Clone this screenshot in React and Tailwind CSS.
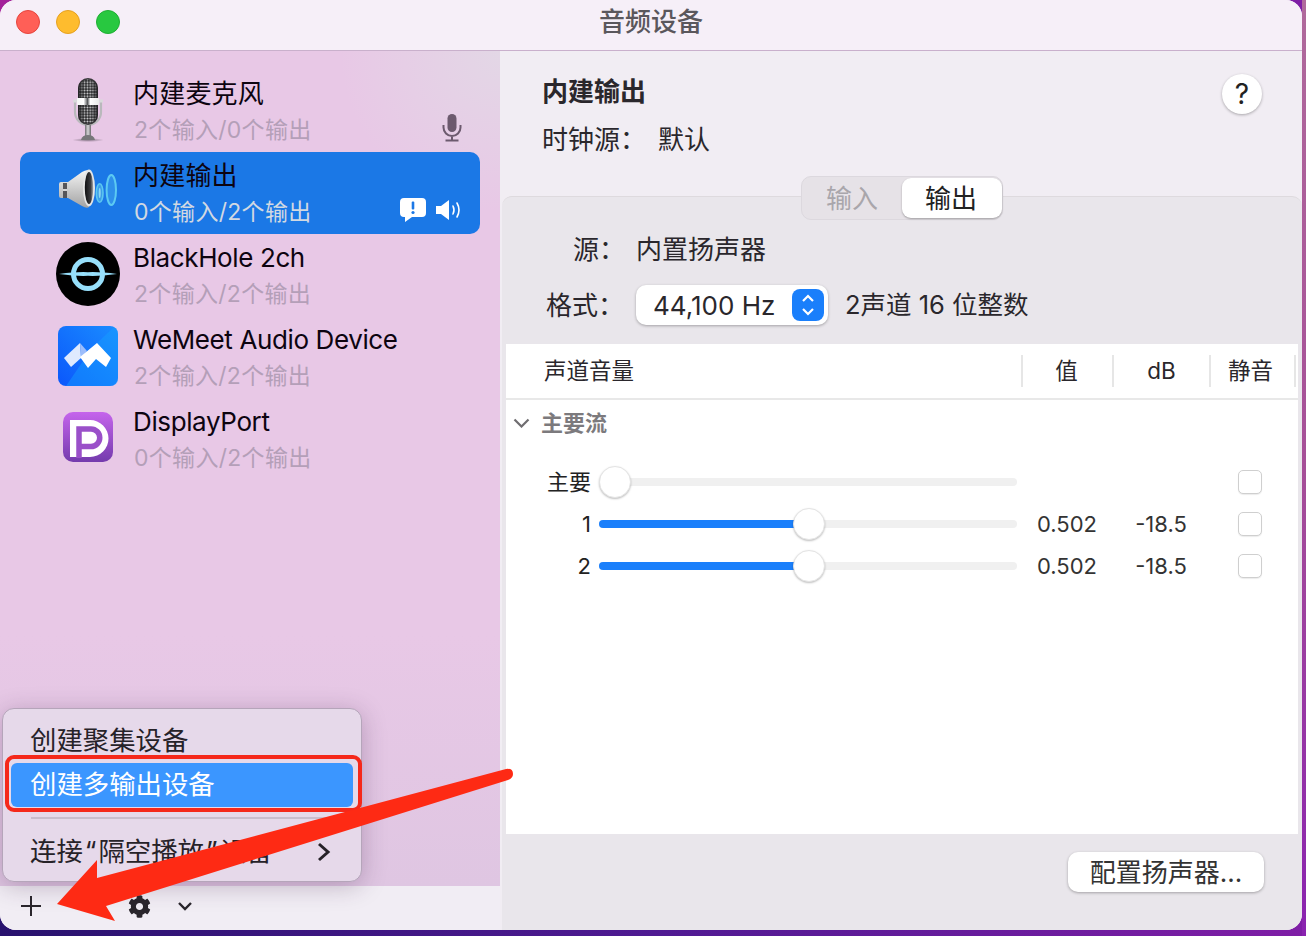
import { FaCog } from "react-icons/fa";

const CJK = "font-['Inter','Noto_Sans_CJK_SC',sans-serif]";

function MicPhoto() {
  return (
    <svg width="32" height="64" viewBox="0 0 32 64">
      <defs>
        <linearGradient id="micBand" x1="0" x2="1" y1="0" y2="0">
          <stop offset="0" stopColor="#f4f4f4" />
          <stop offset="0.3" stopColor="#ffffff" />
          <stop offset="0.48" stopColor="#55575a" />
          <stop offset="0.6" stopColor="#ffffff" />
          <stop offset="1" stopColor="#e8e8e8" />
        </linearGradient>
        <linearGradient id="micStem" x1="0" x2="1" y1="0" y2="0">
          <stop offset="0" stopColor="#6f6f72" />
          <stop offset="0.5" stopColor="#d6d6d8" />
          <stop offset="1" stopColor="#6a6a6d" />
        </linearGradient>
        <linearGradient id="micShade" x1="0" x2="1" y1="0" y2="0">
          <stop offset="0" stopColor="#1d1d1f" stopOpacity="0.75" />
          <stop offset="0.35" stopColor="#1d1d1f" stopOpacity="0" />
          <stop offset="0.7" stopColor="#1d1d1f" stopOpacity="0" />
          <stop offset="1" stopColor="#1d1d1f" stopOpacity="0.75" />
        </linearGradient>
        <pattern id="micDots" width="2.8" height="2.8" patternUnits="userSpaceOnUse">
          <rect width="2.8" height="2.8" fill="#242426" />
          <circle cx="1.4" cy="1.4" r="0.95" fill="#dcdcde" />
        </pattern>
        <radialGradient id="micShadow">
          <stop offset="0" stopColor="#544c56" stopOpacity="0.65" />
          <stop offset="1" stopColor="#544c56" stopOpacity="0" />
        </radialGradient>
      </defs>
      <ellipse cx="16" cy="62" rx="16" ry="2" fill="url(#micShadow)" />
      <path d="M3 22 V34 a13 13 0 0 0 26 0 V22" fill="none" stroke="#b9b9bc" strokeWidth="2.2" />
      <rect x="13" y="47" width="6" height="11" fill="url(#micStem)" />
      <path d="M9 62 q1 -5 7 -5 q6 0 7 5z" fill="#77777a" />
      <rect x="6" y="0" width="20" height="47" rx="10" fill="#3a3a3c" />
      <rect x="7" y="1.5" width="18" height="44" rx="9" fill="url(#micDots)" />
      <rect x="6" y="0" width="20" height="47" rx="10" fill="url(#micShade)" />
      <rect x="5" y="20" width="22" height="7" fill="url(#micBand)" />
      <rect x="1" y="21.5" width="4" height="3" fill="#d9d9db" />
      <rect x="27" y="21.5" width="4" height="3" fill="#d9d9db" />
    </svg>
  );
}

function SpeakerPhoto() {
  return (
    <svg width="60" height="46" viewBox="0 0 60 46">
      <defs>
        <linearGradient id="spkBody" x1="0" x2="0" y1="0" y2="1">
          <stop offset="0" stopColor="#f4f4f4" />
          <stop offset="1" stopColor="#a3a3a3" />
        </linearGradient>
        <linearGradient id="spkCone" x1="0" x2="1" y1="0" y2="0">
          <stop offset="0" stopColor="#0f0f11" />
          <stop offset="0.7" stopColor="#3d3d40" />
          <stop offset="1" stopColor="#a8a8aa" />
        </linearGradient>
      </defs>
      <path d="M1 15 q0 -2 2 -2 h7 L24 3 q5 -3 7 -1 v36 q-2 2 -7 -1 L10 29 h-7 q-2 0 -2 -2z" fill="url(#spkBody)" />
      <rect x="5" y="14" width="4" height="15" fill="#56565a" />
      <rect x="5" y="20" width="4" height="2" fill="#d5d5d5" />
      <ellipse cx="31" cy="19" rx="6" ry="18.5" fill="#e6e6e6" />
      <ellipse cx="31" cy="19" rx="4.2" ry="16" fill="url(#spkCone)" />
      <ellipse cx="41.7" cy="24" rx="3.3" ry="9.3" fill="#3d9ee8" stroke="#5cc8f0" strokeWidth="1.6" />
      <ellipse cx="41.7" cy="24" rx="1" ry="5" fill="#8fd8f2" />
      <ellipse cx="53.3" cy="21" rx="4.7" ry="15" fill="#2f90ea" stroke="#5ccaf2" strokeWidth="2" />
    </svg>
  );
}

function BlackHole() {
  return (
    <svg width="64" height="64" viewBox="0 0 64 64">
      <circle cx="32" cy="32" r="32" fill="#000" />
      <circle cx="32" cy="32" r="14.5" fill="none" stroke="#97dffb" strokeWidth="5" />
      <path d="M3 32 q18 -2.4 29 -1.8 q11 -0.6 29 1.8 q-18 2.4 -29 1.8 q-11 0.6 -29 -1.8z" fill="#97dffb" />
    </svg>
  );
}

function WeMeet() {
  return (
    <svg width="60" height="60" viewBox="0 0 60 60">
      <defs>
        <linearGradient id="wmBg" x1="0" x2="1" y1="1" y2="0">
          <stop offset="0" stopColor="#0b57fb" />
          <stop offset="1" stopColor="#1a8dff" />
        </linearGradient>
      </defs>
      <rect width="60" height="60" rx="8" fill="url(#wmBg)" />
      <path d="M34 22 L56 1 Q60 3 60 8 V52 Q60 60 52 60 H8z" fill="#16a0ff" fillOpacity="0.45" />
      <path d="M6 32 L22 17 L23 32 L13 41z" fill="#dfeafe" />
      <path d="M22 17 L29 25 L23 32z" fill="#9dbdfb" />
      <path d="M22 31 L39 17 L53 32 L48 41 L38 33 L30 42z" fill="#fff" />
    </svg>
  );
}

function DisplayPortIcon() {
  return (
    <svg width="52" height="52" viewBox="0 0 52 52">
      <defs>
        <linearGradient id="dpBg" x1="0" x2="0" y1="0" y2="1">
          <stop offset="0" stopColor="#c564ec" />
          <stop offset="1" stopColor="#743bad" />
        </linearGradient>
      </defs>
      <rect x="1" y="0" width="50" height="50" rx="10" fill="url(#dpBg)" />
      <path d="M8 8 H28 a18.5 18.5 0 0 1 0 37 H8z" fill="#fff" />
      <path d="M17 46 V17 H29 a8.75 8.75 0 0 1 0 17.5 H17" fill="none" stroke="#9a50c9" strokeWidth="5.5" />
    </svg>
  );
}

function SmallMic() {
  return (
    <svg width="20" height="28" viewBox="0 0 20 28" fill="none">
      <rect x="5.5" y="0" width="9" height="18" rx="4.5" fill="#6c5a6e" />
      <path d="M1.5 11 v2.5 a8.5 8.5 0 0 0 17 0 V11 M10 22 v4.5 M3.5 26.5 h13" stroke="#6c5a6e" strokeWidth="2" />
    </svg>
  );
}

function AlertBubble() {
  return (
    <svg width="26" height="24" viewBox="0 0 26 24">
      <path d="M4 0 H22 a4 4 0 0 1 4 4 V15 a4 4 0 0 1 -4 4 H12 L5 24 V19 H4 a4 4 0 0 1 -4 -4 V4 a4 4 0 0 1 4 -4z" fill="#fff" />
      <rect x="11.7" y="3.5" width="2.6" height="8" rx="1" fill="#1b78e6" />
      <circle cx="13" cy="14.5" r="1.6" fill="#1b78e6" />
    </svg>
  );
}

function VolumeGlyph() {
  return (
    <svg width="27" height="20" viewBox="0 0 27 20" fill="none">
      <path d="M0 6 H5 L13 0 V20 L5 14 H0z" fill="#fff" />
      <path d="M17 6 q2 4 0 8 M21 3 q4 7 0 14" stroke="#fff" strokeWidth="1.6" strokeLinecap="round" />
    </svg>
  );
}

const devices = [
  { name: "内建麦克风", sub: "2个输入/0个输出", icon: <MicPhoto />, right: <SmallMic />, rightClass: "right-[18px]" },
  {
    name: "内建输出",
    sub: "0个输入/2个输出",
    icon: <SpeakerPhoto />,
    selected: true,
    rightClass: "right-[17px]",
    right: (
      <div className="flex items-center gap-[10px]">
        <AlertBubble />
        <VolumeGlyph />
      </div>
    ),
  },
  { name: "BlackHole 2ch", sub: "2个输入/2个输出", icon: <BlackHole />, latin: true },
  { name: "WeMeet Audio Device", sub: "2个输入/2个输出", icon: <WeMeet />, latin: true },
  { name: "DisplayPort", sub: "0个输入/2个输出", icon: <DisplayPortIcon />, latin: true },
];

function DeviceRow({ d }) {
  return (
    <div className={`relative mx-[20px] flex h-[82px] rounded-[10px] pl-[36px] ${d.selected ? "bg-[#1b78e6]" : ""}`}>
      <div className="flex w-[64px] items-center justify-center pb-[2px]">{d.icon}</div>
      <div className="ml-[13px] flex flex-col">
        <div
          className={`mt-[6px] h-[36px] text-[26px] leading-[36px] text-[#0d0410] ${
            d.latin ? "tracking-[-0.38px]" : "tracking-[0.2px]"
          }`}
        >
          {d.name}
        </div>
        <div
          className={`ml-[1px] h-[36px] text-[23px] leading-[36px] tracking-[0.3px] ${
            d.selected ? "text-[#d2d9e2]" : "text-[#b49fb8]"
          }`}
        >
          {d.sub}
        </div>
      </div>
      {d.right && <div className={`absolute top-[44px] flex h-[28px] items-center ${d.rightClass}`}>{d.right}</div>}
    </div>
  );
}

function Slider({ filled }) {
  return (
    <div className="relative h-[8px] w-[418px] rounded-full bg-[#f0f0f0]">
      {filled && <div className="h-full w-[200px] rounded-l-full bg-[#1a7ffb]" />}
      <div
        className={`absolute top-[-12px] h-[32px] w-[32px] rounded-full border border-[#e4e4e4] bg-white shadow-[0_1px_2px_rgba(0,0,0,0.25)] ${
          filled ? "left-[194px]" : "left-0"
        }`}
      />
    </div>
  );
}

function ChannelRow({ label, filled, value, db }) {
  return (
    <div className="flex h-[42px] items-center">
      <div className="w-[85px] text-right text-[22px] text-[#222]">{label}</div>
      <div className="ml-[8px]">
        <Slider filled={filled} />
      </div>
      <div className="w-[100px] text-center text-[22px] text-[#333]">{value}</div>
      <div className="w-[88px] text-center text-[22px] text-[#333]">{db}</div>
      <div className="ml-[33px] h-[24px] w-[24px] rounded-[5px] border border-[#cfcfcf] bg-white shadow-[0_1px_1px_rgba(0,0,0,0.08)]" />
    </div>
  );
}

export default function App() {
  return (
    <div
      className={`relative h-[936px] w-[1306px] overflow-hidden bg-[radial-gradient(circle_at_0_0,#a3219a_0,#a3219a_18px,transparent_19px),linear-gradient(90deg,#28126e_0%,#4f1a92_50%,#7f1ea6_100%)] ${CJK}`}
    >
      <div className="absolute inset-y-0 right-0 w-[4px] bg-[linear-gradient(180deg,#b06a9c_0%,#a64f98_50%,#8a22b0_100%)]" />
      <div className="relative flex h-[930px] w-[1302px] flex-col overflow-hidden rounded-[16px] bg-[#f1edf3]">
        {/* title bar */}
        <div className="relative flex h-[51px] shrink-0 items-center justify-center border-b border-[#c9b0cc] bg-[#f6eff8]">
          <div className="absolute left-[16px] top-[10px] flex gap-[16px]">
            <div className="h-[24px] w-[24px] rounded-full border border-[#e5443d] bg-[#ff5f57]" />
            <div className="h-[24px] w-[24px] rounded-full border border-[#e5a020] bg-[#febc2e]" />
            <div className="h-[24px] w-[24px] rounded-full border border-[#1fae33] bg-[#28c840]" />
          </div>
          <div className="mb-[7px] text-[26px] font-medium text-[#5a575c]">音频设备</div>
        </div>

        <div className="flex min-h-0 flex-1">
          {/* sidebar */}
          <div className="flex w-[500px] shrink-0 flex-col">
            <div className="flex-1 bg-[radial-gradient(circle_at_100%_0%,#e3d7e6_0,rgba(232,200,230,0)_160px),linear-gradient(180deg,#e8c8e6_0%,#e8c8e6_70%,#dfc6e2_100%)] pt-[19px]">
              {devices.map((d) => (
                <DeviceRow key={d.name} d={d} />
              ))}
            </div>
            <div className="flex h-[44px] shrink-0 items-center bg-[#f1edf4] pb-[4px] pl-[20px] text-[#2a262c]">
              <svg width="22" height="22" viewBox="0 0 22 22" stroke="currentColor" strokeWidth="2">
                <path d="M11 1 V21 M1 11 H21" />
              </svg>
              <FaCog className="ml-[86px] text-[23px]" />
              <svg className="ml-[26px]" width="16" height="10" viewBox="0 0 16 10" fill="none" stroke="currentColor" strokeWidth="2.4">
                <path d="M2 2 L8 8 L14 2" />
              </svg>
            </div>
          </div>

          {/* detail pane */}
          <div className="ml-[2px] flex min-w-0 flex-1 flex-col">
            <div className="relative h-[145px] shrink-0 pl-[40px] pt-[21px]">
              <div className="h-[40px] text-[26px] font-semibold leading-[40px] text-[#2a272c]">内建输出</div>
              <div className="mt-[8px] flex h-[40px] items-center text-[26px] leading-[40px] text-[#2a272c]">
                <span className="w-[116px]">时钟源：</span>
                <span>默认</span>
              </div>
              <div className="absolute right-[40px] top-[23px] flex h-[40px] w-[40px] items-center justify-center rounded-full bg-white text-[28px] text-[#222] shadow-[0_1px_3px_rgba(0,0,0,0.3)]">
                ?
              </div>
            </div>

            <div className="flex min-h-0 flex-1 flex-col rounded-t-[10px] border-t border-[#dedade] bg-[#e9e6eb]">
              <div className="mx-auto mt-[-21px] flex h-[44px] w-[202px] rounded-[10px] border border-[#dcd8de] bg-[#e6e2e7] text-[26px]">
                <div className="flex w-[100px] items-center justify-center text-[#a9a6ab]">输入</div>
                <div className="mt-[1px] flex h-[40px] w-[100px] items-center justify-center rounded-[9px] bg-white pr-[2px] text-[#222] shadow-[0_1px_2px_rgba(0,0,0,0.3)]">
                  输出
                </div>
              </div>

              <div className="mt-[1px] flex h-[56px] items-center text-[26px] text-[#2a272c]">
                <div className="w-[110px] pl-[71px]">源：</div>
                <div className="ml-[24px]">内置扬声器</div>
              </div>
              <div className="flex h-[56px] items-center text-[26px] text-[#2a272c]">
                <div className="w-[134px] pl-[44px]">格式：</div>
                <div className="flex h-[40px] w-[192px] items-center justify-between rounded-[10px] bg-white pl-[17px] pr-[4px] shadow-[0_1px_3px_rgba(0,0,0,0.3)]">
                  <span className="text-[26px]">44,100 Hz</span>
                  <div className="flex h-[32px] w-[32px] items-center justify-center rounded-[8px] bg-[#1a7ffb]">
                    <svg width="16" height="24" viewBox="0 0 16 24" fill="none" stroke="#fff" strokeWidth="2.2">
                      <path d="M3 8 L8 3 L13 8 M3 16 L8 21 L13 16" />
                    </svg>
                  </div>
                </div>
                <div className="ml-[17px] text-[25.5px]">2声道 16 位整数</div>
              </div>

              <div className="mx-[4px] mt-[11px] flex h-[490px] flex-col bg-white">
                <div className="flex h-[56px] shrink-0 items-center border-b-2 border-[#e8e8e8] text-[22.5px] text-[#2a272c]">
                  <div className="w-[515px] pl-[38px]">声道音量</div>
                  <div className="h-[32px] w-[91px] border-l-2 border-[#e6e6e6] pr-[2px] text-center leading-[32px]">值</div>
                  <div className="h-[32px] w-[97px] border-l-2 border-[#e6e6e6] text-center leading-[32px]">dB</div>
                  <div className="h-[32px] w-[87px] border-x-2 border-[#e6e6e6] pr-[4px] text-center leading-[32px]">静音</div>
                </div>
                <div className="flex h-[46px] shrink-0 items-center pl-[7px] text-[22px] font-semibold text-[#7c7a7d]">
                  <svg width="17" height="10" viewBox="0 0 17 10" fill="none" stroke="#6f6d70" strokeWidth="2.2">
                    <path d="M1.5 1.5 L8.5 8.5 L15.5 1.5" />
                  </svg>
                  <span className="ml-[11px]">主要流</span>
                </div>
                <div className="mt-[15px]">
                  <ChannelRow label="主要" />
                  <ChannelRow label="1" filled value="0.502" db="-18.5" />
                  <ChannelRow label="2" filled value="0.502" db="-18.5" />
                </div>
              </div>

              <div className="flex flex-1 items-start justify-end pr-[38px] pt-[18px]">
                <div className="flex h-[40px] w-[196px] items-center justify-center rounded-[10px] bg-white text-[26px] text-[#333] shadow-[0_1px_3px_rgba(0,0,0,0.3)]">
                  配置扬声器...
                </div>
              </div>
            </div>
          </div>
        </div>
      </div>

      {/* popup menu */}
      <div className="absolute left-[2px] top-[708px] h-[174px] w-[360px] rounded-[12px] border border-[#b5a5ba] bg-[#e6d9ea] text-[26.4px] text-[#262228] shadow-[0_4px_24px_rgba(60,30,70,0.28)]">
        <div className="mt-[10px] flex h-[44px] items-center pl-[27px]">创建聚集设备</div>
        <div className="mx-[8px] flex h-[44px] items-center rounded-[6px] bg-[#3b96ff] pl-[19px] text-white">创建多输出设备</div>
        <div className="mx-[28px] mt-[10px] h-[2px] bg-[#c9bdcd]" />
        <div className="mt-[11px] flex h-[44px] items-center justify-between pl-[27px] pr-[30px]">
          <span>
            连接<span className="mx-[2px]">“</span>隔空播放<span className="mx-[2px]">”</span>设备
          </span>
          <svg width="14" height="20" viewBox="0 0 14 20" fill="none" stroke="#262228" strokeWidth="3">
            <path d="M2 2 L11 10 L2 18" />
          </svg>
        </div>
      </div>

      {/* red annotation */}
      <div className="absolute left-[5px] top-[755px] h-[57px] w-[357px] rounded-[9px] border-[4px] border-[#f5281a]" />
      <svg className="absolute left-0 top-0" width="1306" height="936" viewBox="0 0 1306 936">
        <path d="M57 904 L97 860 L97 878 L506 769 Q513 768 513 774 Q513 778 508 780 L106 906 L115 921z" fill="#fe2a14" />
      </svg>
    </div>
  );
}
